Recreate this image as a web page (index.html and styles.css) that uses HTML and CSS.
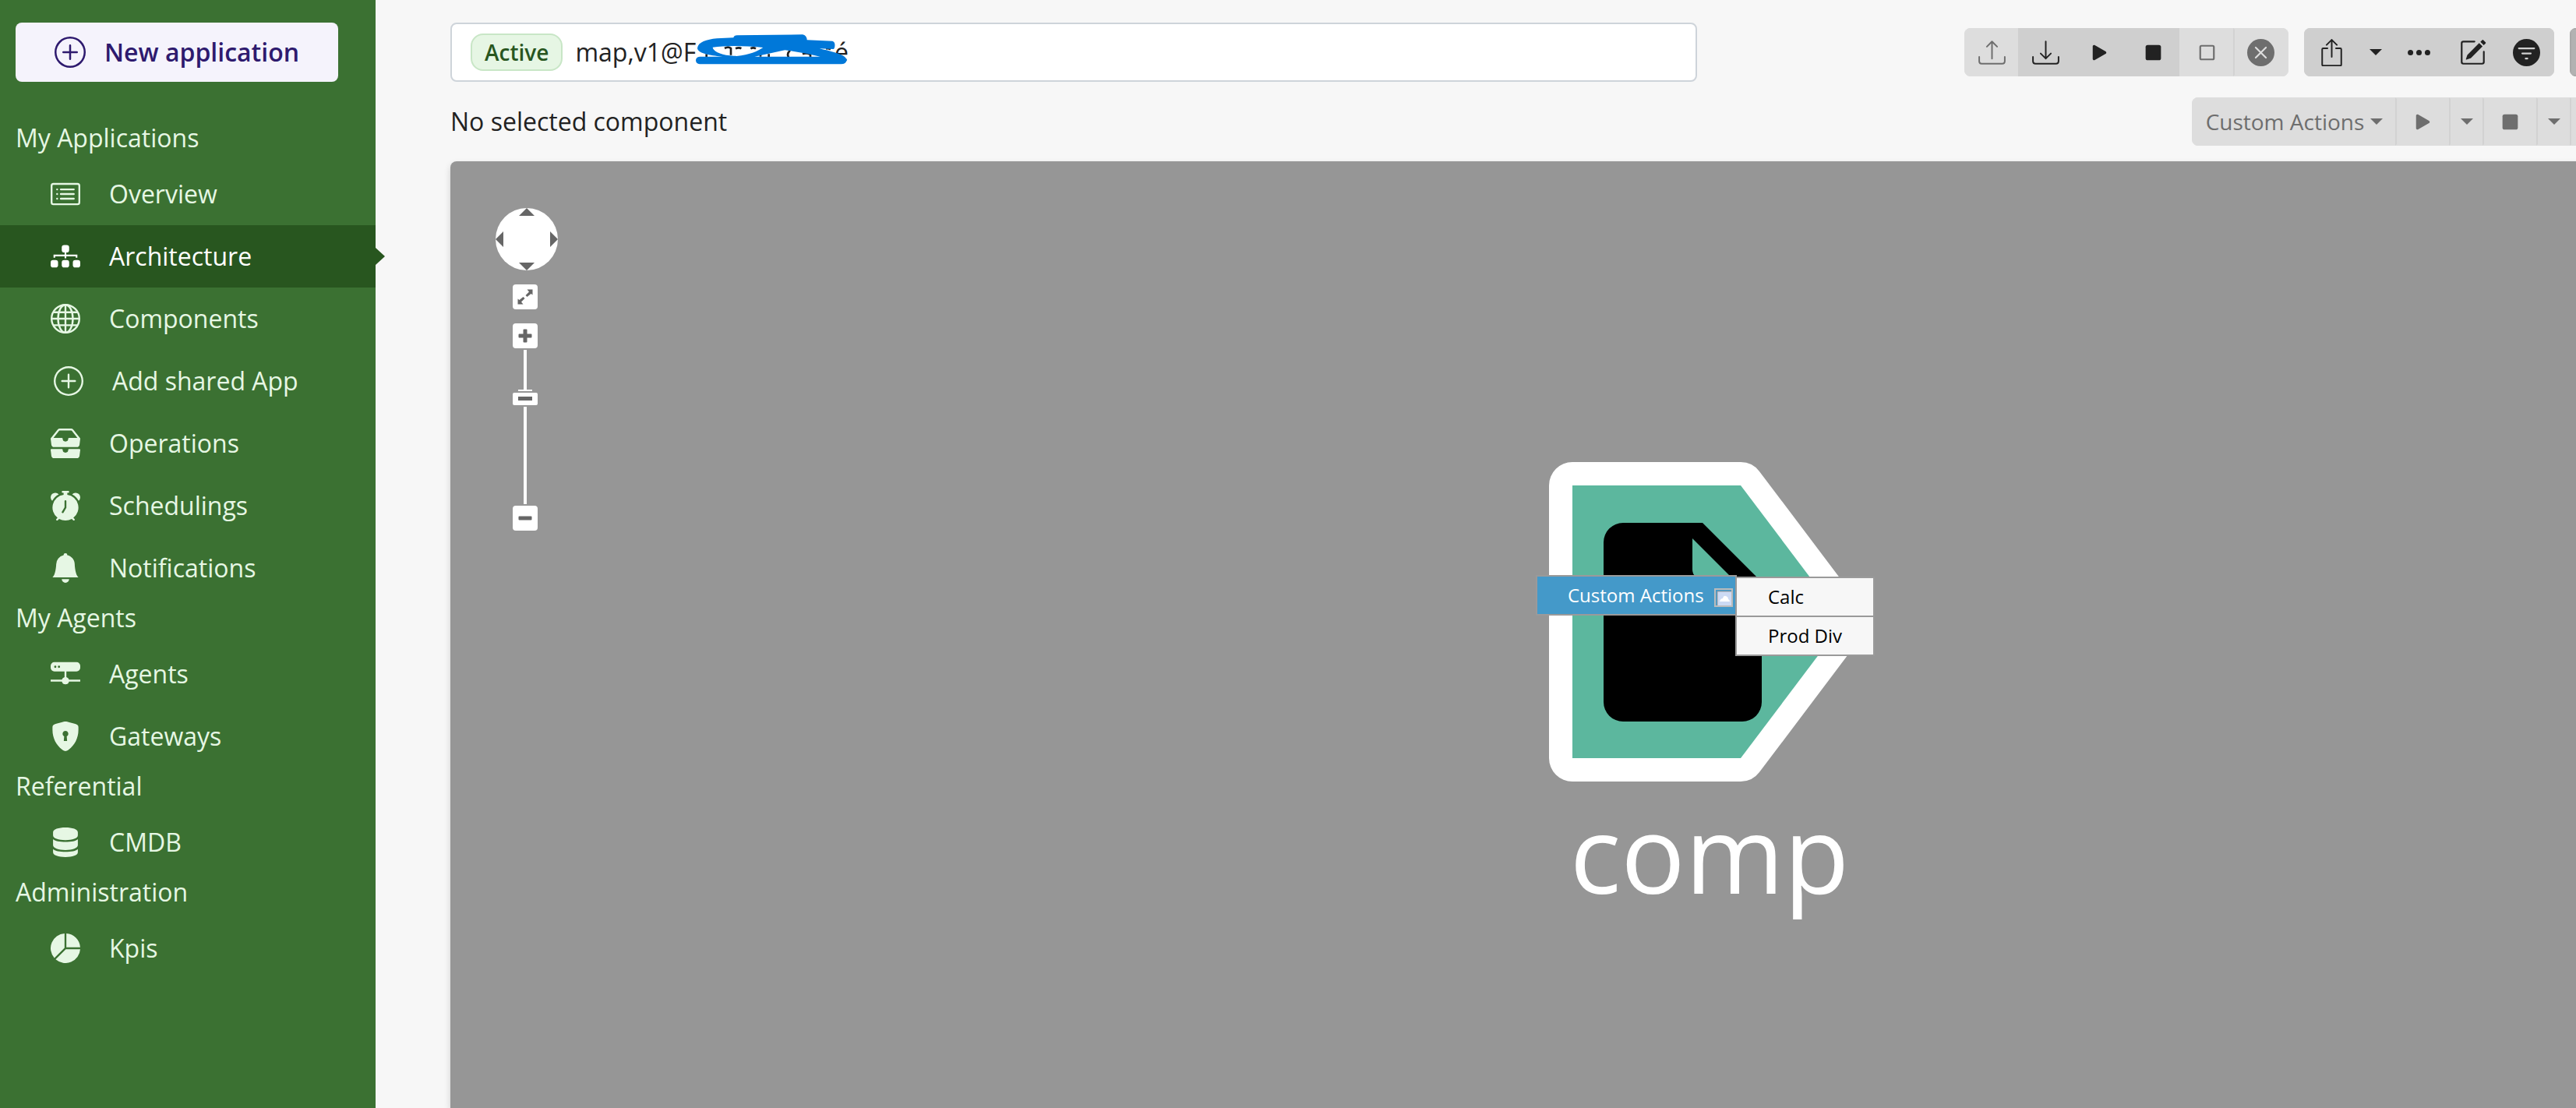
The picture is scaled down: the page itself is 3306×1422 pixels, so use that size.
FILE: index.html
```html
<!DOCTYPE html>
<html lang="en">
<head>
<meta charset="utf-8">
<title>Architecture</title>
<link rel="stylesheet" href="styles.css">
</head>
<body>
<svg class="sprite" aria-hidden="true">
  <symbol id="plus-circle" viewBox="0 0 16 16"><path d="M8 15A7 7 0 1 1 8 1a7 7 0 0 1 0 14zm0 1A8 8 0 1 0 8 0a8 8 0 0 0 0 16z"/><path d="M8 4a.5.5 0 0 1 .5.5v3h3a.5.5 0 0 1 0 1h-3v3a.5.5 0 0 1-1 0v-3h-3a.5.5 0 0 1 0-1h3v-3A.5.5 0 0 1 8 4z"/></symbol>
  <symbol id="play" viewBox="0 0 16 16"><path d="m11.596 8.697-6.363 3.692c-.54.313-1.233-.066-1.233-.697V4.308c0-.63.692-1.01 1.233-.696l6.363 3.692a.802.802 0 0 1 0 1.393z"/></symbol>
  <symbol id="stop" viewBox="0 0 16 16"><rect x="3.500" y="3.500" width="9" height="9" rx="1.200"/></symbol>
  <symbol id="caret" viewBox="0 0 16 8"><path d="M0 0h16L8 8z"/></symbol>
</svg>
<div class="app">
  <aside class="sidebar">
    <button class="new-app" type="button"><svg class="icon-lg"><use href="#plus-circle"/></svg>New application</button>
    <nav class="menu">
      <h2 class="menu-title">My Applications</h2>
      <a class="item" href="#"><svg class="icon" viewBox="0 0 16 16"><path d="M14.5 3a.5.5 0 0 1 .5.5v9a.5.5 0 0 1-.5.5h-13a.5.5 0 0 1-.5-.5v-9a.5.5 0 0 1 .5-.5h13zm-13-1A1.5 1.5 0 0 0 0 3.500v9A1.5 1.5 0 0 0 1.500 14h13a1.500 1.500 0 0 0 1.500-1.500v-9A1.500 1.500 0 0 0 14.500 2h-13z"/><path d="M5 8a.5.5 0 0 1 .5-.5h7a.5.5 0 0 1 0 1h-7A.5.5 0 0 1 5 8zm0-2.500a.5.5 0 0 1 .5-.5h7a.5.5 0 0 1 0 1h-7a.5.5 0 0 1-.5-.5zm0 5a.5.5 0 0 1 .5-.5h7a.5.5 0 0 1 0 1h-7a.5.5 0 0 1-.5-.5zm-1-5a.5.5 0 1 1-1 0 .5.5 0 0 1 1 0zM4 8a.5.5 0 1 1-1 0 .5.5 0 0 1 1 0zm0 2.500a.5.5 0 1 1-1 0 .5.5 0 0 1 1 0z"/></svg>Overview</a>
      <a class="item active" href="#" aria-current="page"><svg class="icon" viewBox="0 0 16 16"><rect x="6" y="1.900" width="4" height="4" rx="1.300"/><rect y="10" width="4" height="4" rx="1.300"/><rect x="6" y="10" width="4" height="4" rx="1.300"/><rect x="12" y="10" width="4" height="4" rx="1.300"/><path d="M2 8.700V7.500h12v1.200M8 5v4" fill="none" stroke="currentColor" stroke-width=".9"/></svg>Architecture</a>
      <a class="item" href="#"><svg class="icon" viewBox="0 0 16 16"><g fill="none" stroke="currentColor"><circle cx="8" cy="8" r="7.500"/><ellipse cx="8" cy="8" rx="4" ry="7.500"/><path d="M8 .5v15M.5 8h15M1.700 4.500h12.600M1.700 11.500h12.600"/></g></svg>Components</a>
      <a class="item shared" href="#"><svg class="icon"><use href="#plus-circle"/></svg>Add shared App</a>
      <a class="item" href="#"><svg class="icon" viewBox="0 0 16 16"><path d="M4.980 1a.5.5 0 0 0-.39.188L1.540 5H6a.5.5 0 0 1 .5.5 1.500 1.500 0 1 0 3 0A.5.5 0 0 1 10 5h4.460l-3.050-3.812A.5.5 0 0 0 11.020 1H4.980zM3.810.563A1.500 1.500 0 0 1 4.980 0h6.040a1.500 1.500 0 0 1 1.170.563l3.700 4.625a.5.5 0 0 1 .106.374l-.39 3.124A1.500 1.500 0 0 1 14.117 10H1.883A1.500 1.500 0 0 1 .394 8.686l-.39-3.124a.5.5 0 0 1 .106-.374L3.810.563zM.125 11.170A.5.5 0 0 1 .5 11H6a.5.5 0 0 1 .5.5 1.500 1.500 0 0 0 3 0 .5.5 0 0 1 .5-.5h5.500a.5.5 0 0 1 .496.562l-.39 3.124A1.500 1.500 0 0 1 14.117 16H1.883a1.500 1.500 0 0 1-1.489-1.314l-.39-3.124a.5.5 0 0 1 .121-.393z"/></svg>Operations</a>
      <a class="item" href="#"><svg class="icon" viewBox="0 0 16 16"><path fill-rule="evenodd" d="M6 .5a.5.5 0 0 1 .5-.5h3a.5.5 0 0 1 0 1H9v1.070a7.001 7.001 0 0 1 3.274 12.474l.601.602a.5.5 0 0 1-.707.708l-.746-.746A6.970 6.970 0 0 1 8 16a6.970 6.970 0 0 1-3.422-.892l-.746.746a.5.5 0 0 1-.707-.708l.602-.602A7.001 7.001 0 0 1 7 2.070V1h-.5A.5.5 0 0 1 6 .5zM.86 5.387A2.500 2.500 0 1 1 4.387 1.860 8.035 8.035 0 0 0 .86 5.387zM11.613 1.860a2.500 2.500 0 1 1 3.527 3.527 8.035 8.035 0 0 0-3.527-3.527zM8.500 5.500a.5.5 0 0 0-1 0v3.362l-1.429 2.380a.5.5 0 1 0 .858.515l1.500-2.500A.5.5 0 0 0 8.500 9V5.500z"/></svg>Schedulings</a>
      <a class="item" href="#"><svg class="icon" viewBox="0 0 16 16"><path d="M8 16a2 2 0 0 0 2-2H6a2 2 0 0 0 2 2zm.995-14.901a1 1 0 1 0-1.990 0A5.002 5.002 0 0 0 3 6c0 1.098-.5 6-2 7h14c-1.500-1-2-5.902-2-7 0-2.420-1.720-4.440-4.005-4.901z"/></svg>Notifications</a>
      <h2 class="menu-title">My Agents</h2>
      <a class="item" href="#"><svg class="icon" viewBox="0 0 16 16"><path fill-rule="evenodd" d="M2 1.600h12a2 2 0 0 1 2 2v1a2 2 0 0 1-2 2H8.500v3.120A2 2 0 0 1 9.940 11.100H16v1H9.940a2 2 0 0 1-3.880 0H0v-1h6.060A2 2 0 0 1 7.500 9.720V6.600H2a2 2 0 0 1-2-2v-1a2 2 0 0 1 2-2zM2.500 4.700a.6.6 0 1 0 0-1.200.6.6 0 0 0 0 1.200zm2 0a.6.6 0 1 0 0-1.200.6.6 0 0 0 0 1.200z"/></svg>Agents</a>
      <a class="item" href="#"><svg class="icon" viewBox="0 0 16 16"><path fill-rule="evenodd" d="M8 0c-.9 0-3.800.8-5.600 1.400C1.500 1.700 1 2.200 1 3v1.500C1 9 3 12.600 6.200 15.200 7 15.800 7.600 16 8 16s1-.2 1.800-.8C13 12.600 15 9 15 4.500V3c0-.8-.5-1.300-1.400-1.600C11.800.8 8.900 0 8 0zm0 5a1.600 1.600 0 0 1 .7 3l.2 2.500H7.100L7.300 8A1.600 1.600 0 0 1 8 5z"/></svg>Gateways</a>
      <h2 class="menu-title">Referential</h2>
      <a class="item" href="#"><svg class="icon" viewBox="0 0 16 16"><path d="M1.300 2.600C1.300.9 4.300 0 8 0s6.700.9 6.700 2.600v1.600c0 1.700-3 2.600-6.700 2.600s-6.700-.9-6.700-2.600zM1.300 6.300C3 8.300 13 8.300 14.700 6.300v3.200c0 1.700-3 2.700-6.700 2.700s-6.700-1-6.700-2.700zM1.300 11.700c1.700 2 11.700 2 13.400 0v1.700c0 1.700-3 2.600-6.700 2.600s-6.700-.9-6.700-2.600z"/></svg>CMDB</a>
      <h2 class="menu-title">Administration</h2>
      <a class="item" href="#"><svg class="icon" viewBox="0 0 16 16"><path d="M15.985 8.500H8.207l-5.500 5.500a8 8 0 0 0 13.277-5.500zM2 13.292A8 8 0 0 1 7.500.015v7.778l-5.500 5.500zM8.500.015V7.500h7.485A8.001 8.001 0 0 0 8.500.015z"/></svg>Kpis</a>
    </nav>
  </aside>

  <main class="main">
    <div class="row">
      <label class="field">
        <span class="badge">Active</span>
        <input class="field-input" type="text" value="map,v1@F" aria-label="Application">
        <span class="mask">
          <svg class="scribble" viewBox="60 36 600 126" aria-hidden="true"><path fill="none" stroke="#222" stroke-width="8" d="M110 118v12M180 96q14-8 24 0v26M222 97q14-6 22 0M236 84l12-10M280 97q10-6 20 0M318 112v16M350 118v12M432 104q-14 12-6 26M480 118q16-6 30 2v12M570 97q10-2 18 3"/><path fill="#0078d9" fill-rule="evenodd" d="M84 128h88C140 124 75 118 75 95c3-23 35-33 75-37l64-3q2-9 14-9l252-3q16 3 17 21l98 4q13 4 8 26l-3 5-55-2c45 11 105 23 105 45q-2 15-22 15H84q-15-2-15-15 0-12 15-14zM134 92c1 13 26 28 66 32 10 1 20 2 26 2 50-6 80-18 102-33q-118-11-194-1zM295 128h253q-68-16-136-25z"/></svg>
          <span class="tail">é</span>
        </span>
      </label>
      <div class="tools">
        <div class="group">
          <button class="tool" disabled aria-label="Upload"><svg class="glyph" viewBox="0 0 16 16"><path fill="none" stroke="currentColor" stroke-linecap="round" stroke-linejoin="round" stroke-width=".9" d="M.5 10.500v2.500q0 1.500 1.500 1.500h12q1.500 0 1.500-1.500v-2.500M8 11.500V1.500M5 4.500l3-3 3 3"/></svg></button>
          <button class="tool" aria-label="Download"><svg class="glyph" viewBox="0 0 16 16"><path fill="none" stroke="currentColor" stroke-linecap="round" stroke-linejoin="round" stroke-width=".9" d="M.5 10.500v2.500q0 1.500 1.500 1.500h12q1.500 0 1.500-1.500v-2.500M8 1.500v10M5 8.500l3 3 3-3"/></svg></button>
          <button class="tool" aria-label="Start"><svg class="glyph"><use href="#play"/></svg></button>
          <button class="tool" aria-label="Stop"><svg class="glyph"><use href="#stop"/></svg></button>
          <button class="tool" disabled aria-label="Deselect"><svg class="glyph" viewBox="0 0 16 16"><rect x="4" y="4" width="8" height="8" rx=".7" fill="none" stroke="currentColor"/></svg></button>
          <button class="tool" disabled aria-label="Cancel"><svg class="glyph" viewBox="0 0 16 16"><circle cx="8" cy="8" r="8"/><path d="m5 5 6 6m0-6-6 6" stroke="#ddd" stroke-linecap="round"/></svg></button>
        </div>
        <div class="group">
          <button class="tool" aria-label="Share"><svg class="glyph" viewBox="0 0 16 16"><path fill="none" stroke="currentColor" stroke-linecap="round" stroke-linejoin="round" stroke-width=".9" d="M5.500 5.500H3q-.6 0-.6.600v9q0 .6.600.6h10q.6 0 .6-.6v-9q0-.6-.6-.6h-2.500M8 10.500V.5M5 3.500l3-3 3 3"/></svg></button>
          <button class="tool slim" aria-label="Share options"><svg class="caret"><use href="#caret"/></svg></button>
          <button class="tool" aria-label="More"><svg class="glyph" viewBox="0 0 16 16"><circle cx="3" cy="8" r="1.600"/><circle cx="8" cy="8" r="1.600"/><circle cx="13" cy="8" r="1.600"/></svg></button>
          <button class="tool" aria-label="Edit"><svg class="glyph" viewBox="0 0 16 16"><path d="M15.502 1.940a.5.5 0 0 1 0 .706L14.459 3.690l-2-2L13.502.646a.5.5 0 0 1 .707 0l1.293 1.293zm-1.750 2.456-2-2L4.939 9.210a.5.5 0 0 0-.121.196l-.805 2.414a.25.25 0 0 0 .316.316l2.414-.805a.5.5 0 0 0 .196-.120l6.813-6.814z"/><path d="M1 13.500A1.500 1.500 0 0 0 2.500 15h11a1.500 1.500 0 0 0 1.500-1.500v-6a.5.5 0 0 0-1 0v6a.5.5 0 0 1-.5.5h-11a.5.5 0 0 1-.5-.5v-11a.5.5 0 0 1 .5-.5H9a.5.5 0 0 0 0-1H2.500A1.500 1.500 0 0 0 1 2.500v11z"/></svg></button>
          <button class="tool" aria-label="Filter"><svg class="glyph" viewBox="0 0 16 16"><circle cx="8" cy="8" r="8"/><path d="M3.500 5.500h9M5.500 8.500h5M7.500 11.500h1" stroke="#cfcfcf" stroke-linecap="round"/></svg></button>
        </div>
        <div class="group"><button class="tool pressed" aria-label="Layout"></button></div>
      </div>
    </div>
    <div class="row">
      <p class="status">No selected component</p>
      <div class="group">
        <button class="tool wide" disabled>Custom Actions<svg class="caret"><use href="#caret"/></svg></button>
        <button class="tool" disabled aria-label="Start component"><svg class="glyph"><use href="#play"/></svg></button>
        <button class="tool slim" disabled aria-label="Start options"><svg class="caret"><use href="#caret"/></svg></button>
        <button class="tool" disabled aria-label="Stop component"><svg class="glyph"><use href="#stop"/></svg></button>
        <button class="tool slim" disabled aria-label="Stop options"><svg class="caret"><use href="#caret"/></svg></button>
        <button class="tool" disabled aria-label="Deselect component"></button>
      </div>
    </div>
    <section class="canvas" aria-label="Architecture map">
      <div class="controls">
        <svg class="pan" viewBox="0 0 80 80" role="img" aria-label="Pan"><circle cx="40" cy="40" r="40" fill="#fff"/><path fill="#666" d="M30 10h20L40 0zM30 70h20L40 80zM10 30v20L0 40zM70 30v20l10-10z"/></svg>
        <button class="zoom fit" aria-label="Fit"><svg class="zoom-icon" viewBox="0 0 20 20"><path d="M12.500.5H19.500v7l-2-1.500-5 4-2-2 4.500-4.500zM.5 12.500l2 1.500 5-4 2 2L5 16.500l2.500 3h-7z"/></svg></button>
        <button class="zoom" aria-label="Zoom in"><svg class="zoom-icon" viewBox="0 0 20 20"><path d="M7.500 2.500q0-1 1-1h3q1 0 1 1v5h5q1 0 1 1v3q0 1-1 1h-5v5q0 1-1 1h-3q-1 0-1-1v-5h-5q-1 0-1-1v-3q0-1 1-1h5z"/></svg></button>
        <input class="slider" type="range" min="0" max="100" value="70" aria-label="Zoom level">
        <button class="zoom" aria-label="Zoom out"><svg class="zoom-icon" viewBox="0 0 20 20"><rect x="1.500" y="7.500" width="17" height="5" rx="1"/></svg></button>
      </div>
      <figure class="node">
        <svg class="node-shape" viewBox="0 0 412 412" aria-hidden="true"><path d="M30 31h216l132 175-132 175H30z" fill="#5cb79e" stroke="#fff" stroke-width="60" stroke-linejoin="round"/><path d="M30 31h216l132 175-132 175H30z" fill="#5cb79e"/><path fill="#000" fill-rule="evenodd" d="M95 79h102l76 76v154a25 25 0 0 1-25 25H95a25 25 0 0 1-25-25V104a25 25 0 0 1 25-25zM184 99v40a12 12 0 0 0 12 12h40z"/></svg>
        <figcaption class="node-name">comp</figcaption>
      </figure>
      <div class="context">
        <button class="context-item parent" type="button">Custom Actions
          <svg class="broken" viewBox="0 0 24 24" aria-hidden="true"><path d="M1 1h22v22H1z" fill="none" stroke="#bbb" stroke-width="2"/><path d="M4 4h18v18H4z" fill="#ccdaf4"/><path d="M4 22V4h18" fill="none" stroke="#999"/><path d="M7 17q1-4 4-4 1-4 4-3 3 1 3 4 2 1 2 3z" fill="#fff"/></svg>
        </button>
        <div class="submenu">
          <button class="context-item" type="button">Calc</button>
          <button class="context-item" type="button">Prod Div</button>
        </div>
      </div>
    </section>
  </main>
</div>
</body>
</html>
```
FILE: styles.css
```css
* { box-sizing: border-box; }
body {
  margin: 0;
  background: #f7f7f7;
  color: #222;
  font: 32px/44px "Open Sans", "Noto Sans", sans-serif;
}
button, input { font: inherit; color: inherit; margin: 0; }
svg { display: block; fill: currentColor; flex: none; }
.sprite { position: absolute; width: 0; height: 0; }
.app { display: flex; min-height: 100vh; overflow: hidden; }

/* sidebar */
.sidebar {
  flex: none;
  width: 482px;
  padding-top: 29px;
  background: #3b7132;
  color: #e6f7e4;
}
.new-app {
  display: flex;
  align-items: center;
  gap: 24px;
  width: 414px;
  height: 76px;
  margin: 0 20px 48px;
  padding: 0 50px;
  border: 0;
  border-radius: 8px;
  background: #f5f3fc;
  color: #2e1a6e;
  font-weight: 600;
  white-space: nowrap;
}
.icon-lg { width: 40px; height: 40px; }
.icon { width: 38px; height: 38px; }
.menu-title { margin: 0; padding: 2px 20px 10px; font-size: 32px; font-weight: 400; }
.item {
  position: relative;
  display: flex;
  align-items: center;
  gap: 37px;
  height: 80px;
  padding-left: 65px;
  color: inherit;
  text-decoration: none;
}
.item.shared { padding-left: 69px; }
.item.active { background: #28561f; color: #fff; }
.item.active::after {
  content: "";
  position: absolute;
  left: 100%;
  border: solid transparent;
  border-width: 11px 0 11px 12px;
  border-left-color: #28561f;
}

/* main area: runs past the right edge of the window */
.main {
  flex: 1;
  display: flex;
  flex-direction: column;
  gap: 20px;
  min-width: 0;
  margin-right: -63px;
  padding: 29px 0 0 96px;
}
.row { display: flex; align-items: center; justify-content: space-between; gap: 20px; }
.field {
  position: relative;
  flex: 0 1 1600px;
  display: flex;
  align-items: center;
  gap: 16px;
  height: 76px;
  padding: 0 24px;
  border: 2px solid #ced4da;
  border-radius: 8px;
  background: #fff;
}
.badge {
  padding: 0 16px;
  border: 2px solid #c8e6c6;
  border-radius: 16px;
  background: #e6f6e4;
  color: #28561f;
  font-size: 28px;
  font-weight: 600;
}
.field-input { flex: 1; min-width: 0; padding: 0; border: 0; background: none; outline: 0; }
.mask { position: absolute; left: 310px; top: 11px; z-index: 0; }
.scribble { width: 200px; height: 42px; }
.tail { position: absolute; left: 181px; top: 3px; z-index: -1; }
.status { margin: 0; }

.tools { display: flex; gap: 20px; }
.group { display: flex; flex: none; border-radius: 8px; overflow: hidden; }
.tool {
  display: flex;
  align-items: center;
  justify-content: center;
  width: 71px;
  height: 62px;
  padding: 0;
  border: 2px solid #cfcfcf;
  background: #cfcfcf;
}
.tool + .tool { margin-left: -2px; }
.tool:disabled { background: #ddd; border-color: #ddd; color: #6e6e6e; }
.tool:disabled + .tool:disabled { border-left-color: #d2d2d2; }
.tool.slim { width: 45px; }
.tool.wide { gap: 8px; width: 263px; font-size: 28px; white-space: nowrap; }
.tool.pressed { background: #b2b2b2; border-color: #a9a9a9; }
.glyph { width: 35px; height: 35px; }
.caret { width: 16px; height: 8px; }

/* map */
.canvas {
  position: relative;
  flex: 1;
  min-height: 960px;
  border-radius: 8px 8px 0 0;
  background: #969696;
  box-shadow: 0 4px 8px rgba(0, 0, 0, .16);
}
.controls {
  position: absolute;
  left: 58px;
  top: 60px;
  display: flex;
  flex-direction: column;
}
.pan { width: 80px; height: 80px; }
.zoom {
  display: grid;
  place-items: center;
  width: 32px;
  height: 32px;
  margin-left: 22px;
  padding: 0;
  border: 0;
  border-radius: 4px;
  background: #fff;
  color: #666;
}
.zoom.fit { margin-top: 18px; margin-bottom: 18px; }
.zoom-icon { width: 20px; height: 20px; }
.slider {
  -webkit-appearance: none;
  appearance: none;
  writing-mode: vertical-lr;
  direction: rtl;
  width: 32px;
  height: 198px;
  margin: 2px 0 2px 22px;
  background: linear-gradient(#fff, #fff) center / 4px 100% no-repeat;
}
.slider::-webkit-slider-thumb {
  -webkit-appearance: none;
  width: 32px;
  height: 16px;
  border-radius: 2px;
  background: linear-gradient(#666, #666) center / 18px 5px no-repeat #fff;
  box-shadow: 0 0 0 2px #969696, 0 -11px 0 -7px #fff;
}
.node { position: absolute; left: 1410px; top: 385px; width: 412px; margin: 0; }
.node-shape { width: 412px; height: 412px; }
.node-name { color: #fff; font-size: 137px; line-height: 180px; text-align: center; }
.context { position: absolute; left: 1393px; top: 531px; display: flex; align-items: flex-start; font-size: 24px; }
.submenu { display: flex; flex-direction: column; width: 179px; margin: 2px 0 0 -2px; }
.context-item {
  height: 52px;
  padding: 0 0 0 40px;
  border: 2px solid #9a9a9a;
  background: #f7f7f7;
  color: #000;
  text-align: left;
}
.context-item + .context-item { margin-top: -2px; }
.context-item.parent {
  display: flex;
  align-items: center;
  justify-content: space-between;
  width: 258px;
  padding: 0 3px 0 39px;
  background: #4499c9;
  color: #fff;
}
.broken { width: 24px; height: 24px; margin-top: 5px; }
```
